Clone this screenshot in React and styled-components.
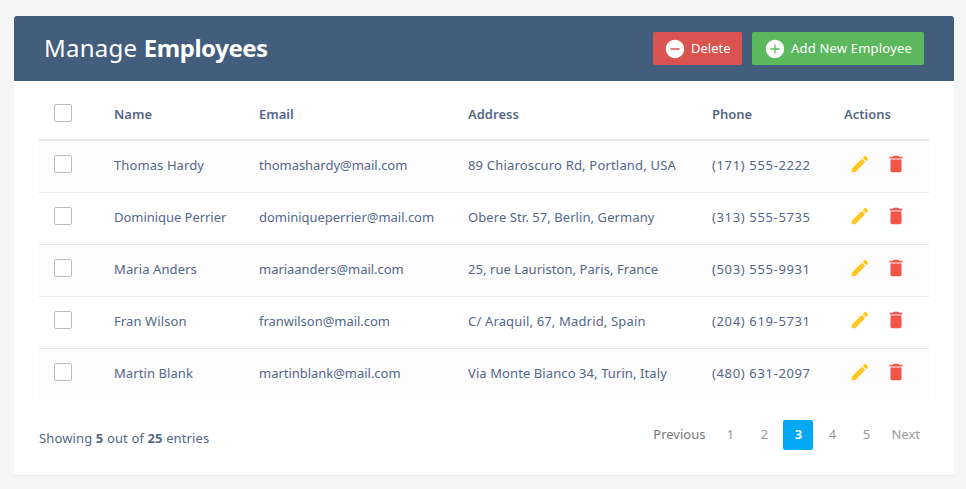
import React from "react";
import styled, { createGlobalStyle } from "styled-components";

const GlobalStyle = createGlobalStyle`
  *, *::before, *::after { box-sizing: border-box; }
  body {
    margin: 0;
    background: #f5f5f5;
    color: #566787;
    font: 13px/18px "Noto Sans", sans-serif;
  }
`;

const Page = styled.div`
  height: 489px;
  padding: 16px 12px 0 14px;
  overflow: hidden;
`;

const Card = styled.main`
  height: 459px;
  padding: 0 25px;
  background: #fff;
  border-radius: 3px;
  box-shadow: 0 1px 1px rgba(0, 0, 0, 0.05);
`;

const TitleBar = styled.header`
  display: flex;
  align-items: center;
  gap: 10px;
  height: 65px;
  margin: 0 -25px;
  padding: 0 30px;
  background: #435d7d;
  color: #fff;
  border-radius: 3px 3px 0 0;
`;

const Title = styled.h2`
  flex: 1;
  margin: 0;
  padding-bottom: 1px;
  font-size: 24px;
  line-height: 32px;
  font-weight: 400;
  letter-spacing: 0.25px;
  white-space: nowrap;

  b {
    font-weight: 700;
    letter-spacing: -0.47px;
  }
`;

const ActionButton = styled.button`
  display: flex;
  align-items: center;
  width: ${(p) => p.$width}px;
  height: 33px;
  padding: 0 0 0 ${(p) => p.$inset}px;
  border: 0;
  border-radius: 2px;
  background: ${(p) => p.$color};
  color: #fff;
  font: inherit;
  letter-spacing: ${(p) => p.$tracking || 0}px;
  white-space: nowrap;

  svg { flex: none; margin-right: 5px; }
`;

const ButtonLabel = styled.span`
  padding-bottom: 2px;
`;

const ButtonGroup = styled.div`
  display: flex;
  gap: 10px;
`;

const Table = styled.div`
  height: 319px;
`;

const Row = styled.div`
  display: grid;
  grid-template-columns: 60px 145px 209px 244px 132px 100px;
  height: 52px;
  border-top: 1px solid #e9e9e9;
  background: ${(p) => (p.$striped ? "#fcfcfc" : "#fff")};

  &:nth-child(2) {
    height: 51px;
    border-top: 0;
  }
`;

const HeadRow = styled(Row)`
  height: 60px;
  padding-top: 8px;
  border-top: 0;
  border-bottom: 2px solid #e9e9e9;
  font-weight: 600;
`;

const Cell = styled.div`
  display: flex;
  align-items: center;
  padding: 0 0 3px 15px;
  letter-spacing: ${(p) => p.$tracking || 0}px;
  white-space: nowrap;
`;

const HeadCell = styled(Cell)`
  padding-bottom: ${(p) => (p.$check ? 2 : 1)}px;
`;

const CheckCell = styled(Cell)`
  padding-bottom: 6px;
`;

const IconCell = styled(Cell)`
  gap: 14px;
  padding: 0 0 5px 19.5px;
`;

const Checkbox = styled.span`
  width: 18px;
  height: 18px;
  border: 1px solid #bbb;
  border-radius: 2px;
  background: #fff;
`;

const Icon = styled.svg`
  display: block;
  width: 22px;
  height: 22px;
  fill: ${(p) => p.$color || "currentColor"};
  opacity: ${(p) => (p.$color ? 0.9 : 1)};
`;

const Footer = styled.footer`
  display: flex;
  justify-content: space-between;
  padding-top: 20px;
`;

const Summary = styled.div`
  padding-top: 9px;
  letter-spacing: 0.13px;
`;

const Pagination = styled.nav`
  display: flex;
  gap: 4px;
  margin-right: 3px;
`;

const PageLink = styled.a`
  min-width: 30px;
  height: 30px;
  padding: 0 ${(p) => (p.$wide ? 6 : 0)}px 0 0;
  border-radius: 2px;
  background: ${(p) => (p.$active ? "#03a9f4" : "transparent")};
  color: ${(p) => (p.$active ? "#fff" : p.$dark ? "#777" : "#999")};
  font-weight: ${(p) => (p.$active ? 600 : 400)};
  line-height: 29px;
  text-align: center;

  &:last-child { padding: 0 0 0 4px; margin-left: 2px; margin-right: 6px; }
`;

const MinusCircle = () => (
  <Icon viewBox="0 0 24 24">
    <path d="M12 2C6.48 2 2 6.48 2 12s4.48 10 10 10 10-4.48 10-10S17.52 2 12 2zm5 10.8H7v-1.6h10v1.6z" />
  </Icon>
);

const PlusCircle = () => (
  <Icon viewBox="0 0 24 24">
    <path d="M12 2C6.48 2 2 6.48 2 12s4.48 10 10 10 10-4.48 10-10S17.52 2 12 2zm5 10.7h-4.3V17h-1.4v-4.3H7v-1.4h4.3V7h1.4v4.3H17v1.4z" />
  </Icon>
);

const Pencil = () => (
  <Icon viewBox="0 0 24 24" $color="#ffc107">
    <path d="M3 17.25V21h3.75L17.81 9.94l-3.75-3.75L3 17.25zM20.71 7.04c.39-.39.39-1.02 0-1.41l-2.34-2.34c-.39-.39-1.02-.39-1.41 0l-1.83 1.83 3.75 3.75 1.83-1.83z" />
  </Icon>
);

const Trash = () => (
  <Icon viewBox="0 0 24 24" $color="#f44336">
    <path d="M6 19c0 1.1.9 2 2 2h8c1.1 0 2-.9 2-2V7H6v12zM19 4h-3.5l-1-1h-5l-1 1H5v2h14V4z" />
  </Icon>
);

const employees = [
  { name: ["Thomas Hardy", 0.1], email: "thomashardy@mail.com", address: ["89 Chiaroscuro Rd, Portland, USA", 0.18], phone: "(171) 555-2222" },
  { name: ["Dominique Perrier", -0.04], email: "dominiqueperrier@mail.com", address: ["Obere Str. 57, Berlin, Germany", 0.08], phone: "(313) 555-5735" },
  { name: ["Maria Anders", 0.1], email: "mariaanders@mail.com", address: ["25, rue Lauriston, Paris, France", 0.06], phone: "(503) 555-9931" },
  { name: ["Fran Wilson", 0.1], email: "franwilson@mail.com", address: ["C/ Araquil, 67, Madrid, Spain", 0.16], phone: "(204) 619-5731" },
  { name: ["Martin Blank", 0.08], email: "martinblank@mail.com", address: ["Via Monte Bianco 34, Turin, Italy", 0.09], phone: "(480) 631-2097" },
];

export default function App() {
  return (
    <Page>
      <GlobalStyle />
      <Card>
        <TitleBar>
          <Title>Manage <b>Employees</b></Title>
          <ButtonGroup>
            <ActionButton $width={89} $inset={11} $color="#d9534f">
              <MinusCircle />
              <ButtonLabel>Delete</ButtonLabel>
            </ActionButton>
            <ActionButton $width={172} $inset={12} $color="#5cb85c" $tracking={0.2}>
              <PlusCircle />
              <ButtonLabel>Add New Employee</ButtonLabel>
            </ActionButton>
          </ButtonGroup>
        </TitleBar>
        <Table>
          <HeadRow>
            <HeadCell $check><Checkbox /></HeadCell>
            {["Name", "Email", "Address", "Phone", "Actions"].map((h) => <HeadCell key={h}>{h}</HeadCell>)}
          </HeadRow>
          {employees.map((e, i) => (
            <Row key={e.email} $striped={i % 2 === 0}>
              <CheckCell><Checkbox /></CheckCell>
              <Cell $tracking={e.name[1]}>{e.name[0]}</Cell>
              <Cell $tracking={-0.03}>{e.email}</Cell>
              <Cell $tracking={e.address[1]}>{e.address[0]}</Cell>
              <Cell $tracking={0.64}>{e.phone}</Cell>
              <IconCell><Pencil /><Trash /></IconCell>
            </Row>
          ))}
        </Table>
        <Footer>
          <Summary>Showing <b>5</b> out of <b>25</b> entries</Summary>
          <Pagination>
            <PageLink $wide $dark>Previous</PageLink>
            <PageLink>1</PageLink>
            <PageLink>2</PageLink>
            <PageLink $active>3</PageLink>
            <PageLink>4</PageLink>
            <PageLink>5</PageLink>
            <PageLink>Next</PageLink>
          </Pagination>
        </Footer>
      </Card>
    </Page>
  );
}
